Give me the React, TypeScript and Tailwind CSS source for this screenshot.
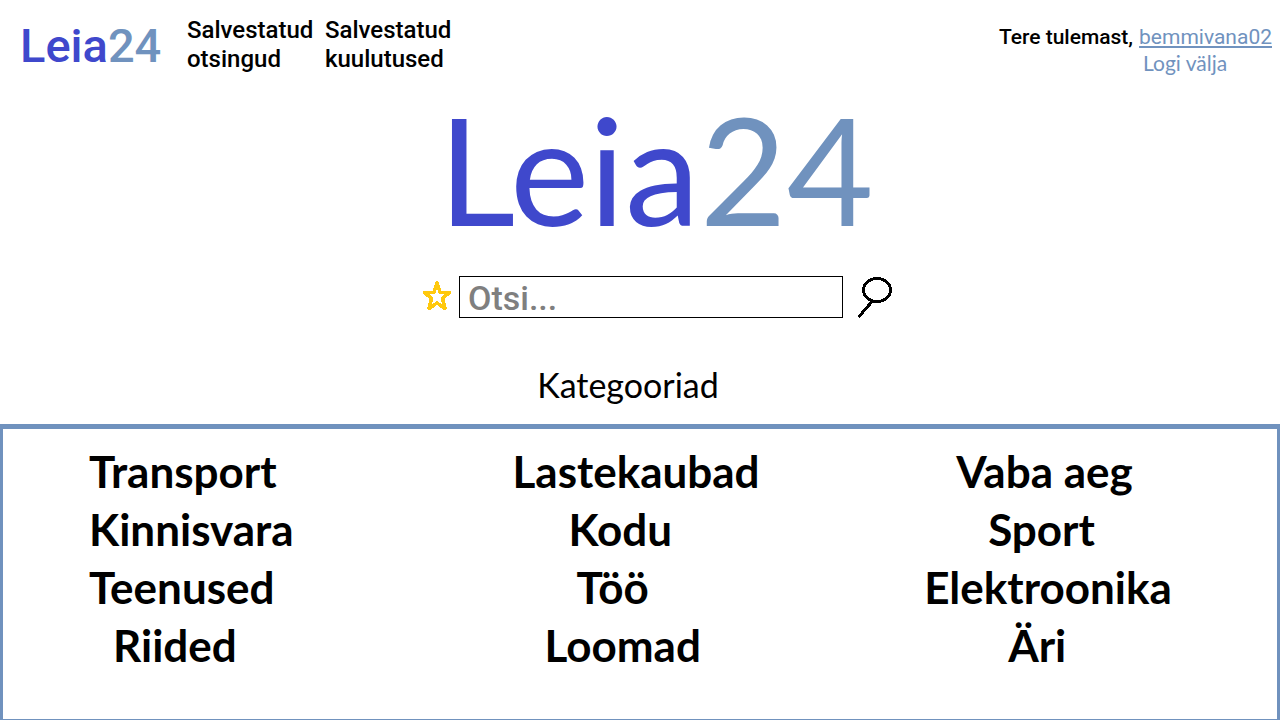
type Category = { name: string; indent: string };

const columns: Category[][] = [
  [
    { name: "Transport", indent: "pl-0" },
    { name: "Kinnisvara", indent: "pl-0" },
    { name: "Teenused", indent: "pl-0" },
    { name: "Riided", indent: "pl-6" },
  ],
  [
    { name: "Lastekaubad", indent: "pl-0" },
    { name: "Kodu", indent: "pl-14" },
    { name: "Töö", indent: "pl-16" },
    { name: "Loomad", indent: "pl-8" },
  ],
  [
    { name: "Vaba aeg", indent: "pl-8" },
    { name: "Sport", indent: "pl-16" },
    { name: "Elektroonika", indent: "pl-0" },
    { name: "Äri", indent: "pl-21" },
  ],
];

function Header() {
  return (
    <header className="flex items-start justify-between pt-4 pr-2 pl-5 font-['Roboto',sans-serif] font-medium">
      <div className="flex items-start">
        <a href="#" className="w-[167px] text-[47px] leading-[60px] text-[#3f48cc]">
          Leia<span className="text-[#7092be]">24</span>
        </a>
        <nav className="flex gap-3 text-[24px] leading-[29px] text-black">
          <a href="#otsingud" className="w-[126px]">
            Salvestatud otsingud
          </a>
          <a href="#kuulutused" className="w-[126px]">
            Salvestatud kuulutused
          </a>
        </nav>
      </div>
      <div className="grid grid-cols-[auto_auto] gap-x-1.5 pt-2 text-[21px] leading-[27px]">
        <span className="text-black">Tere tulemast,</span>
        <a href="#konto" className="font-normal text-[#7092be] underline underline-offset-2">
          bemmivana02
        </a>
        <a href="#valja" className="col-start-2 pl-1 font-['Lato',sans-serif] leading-6 font-normal text-[#7092be]">
          Logi välja
        </a>
      </div>
    </header>
  );
}

function SearchBar() {
  return (
    <form className="mt-[34px] flex items-start justify-center pl-9" onSubmit={(e) => e.preventDefault()}>
      <button type="button" aria-label="Salvesta otsing" className="mt-1 mr-2 shrink-0">
        <svg width="28" height="32" viewBox="0 0 28 32" fill="none" stroke="#ffc90e" strokeWidth="3.500" strokeLinejoin="round" shapeRendering="crispEdges">
          <path d="M14 3 L17.300 12.500 H26.500 L19.500 18.500 L22 28.500 L14 23 L6 28.500 L8.500 18.500 L1.500 12.500 H10.700 Z" />
        </svg>
      </button>
      <input
        type="text"
        aria-label="Otsi"
        placeholder="Otsi..."
        className="h-[42px] w-96 min-w-0 border border-black px-2 pt-0.5 font-['Roboto',sans-serif] text-[34px] font-medium text-black outline-none placeholder:text-[#7f7f7f]"
      />
      <button type="submit" aria-label="Otsi kuulutusi" className="ml-3.5 shrink-0">
        <svg width="36" height="42" viewBox="0 0 36 42" fill="none" stroke="#000" strokeWidth="3" strokeLinecap="round" shapeRendering="crispEdges">
          <ellipse cx="20" cy="14" rx="13.500" ry="11.500" />
          <path d="M15 25.500 L2.500 40" />
        </svg>
      </button>
    </form>
  );
}

export default function App() {
  return (
    <div className="flex min-h-screen flex-col bg-white font-['Lato',sans-serif]">
      <Header />
      <main className="flex flex-1 flex-col">
        <h1 className="mt-[18px] pl-8 text-center text-[150px] leading-[148px] text-[#3f48cc]">
          Leia<span className="text-[#7092be]">24</span>
        </h1>
        <SearchBar />
        <h2 className="mt-[47px] pr-6 text-center text-[34px] leading-[40px] text-black">Kategooriad</h2>
        <section className="mt-[19px] grid flex-1 grid-cols-[36fr_35fr_30fr] border-x-[3px] border-t-[5px] border-b border-[#7092be] pt-[13px] pl-[86px]">
          {columns.map((column) => (
            <ul key={column[0].name} className="text-[44px] leading-[58px] font-bold text-black">
              {column.map((item) => (
                <li key={item.name} className={item.indent}>
                  <a href="#kategooria">{item.name}</a>
                </li>
              ))}
            </ul>
          ))}
        </section>
      </main>
    </div>
  );
}
